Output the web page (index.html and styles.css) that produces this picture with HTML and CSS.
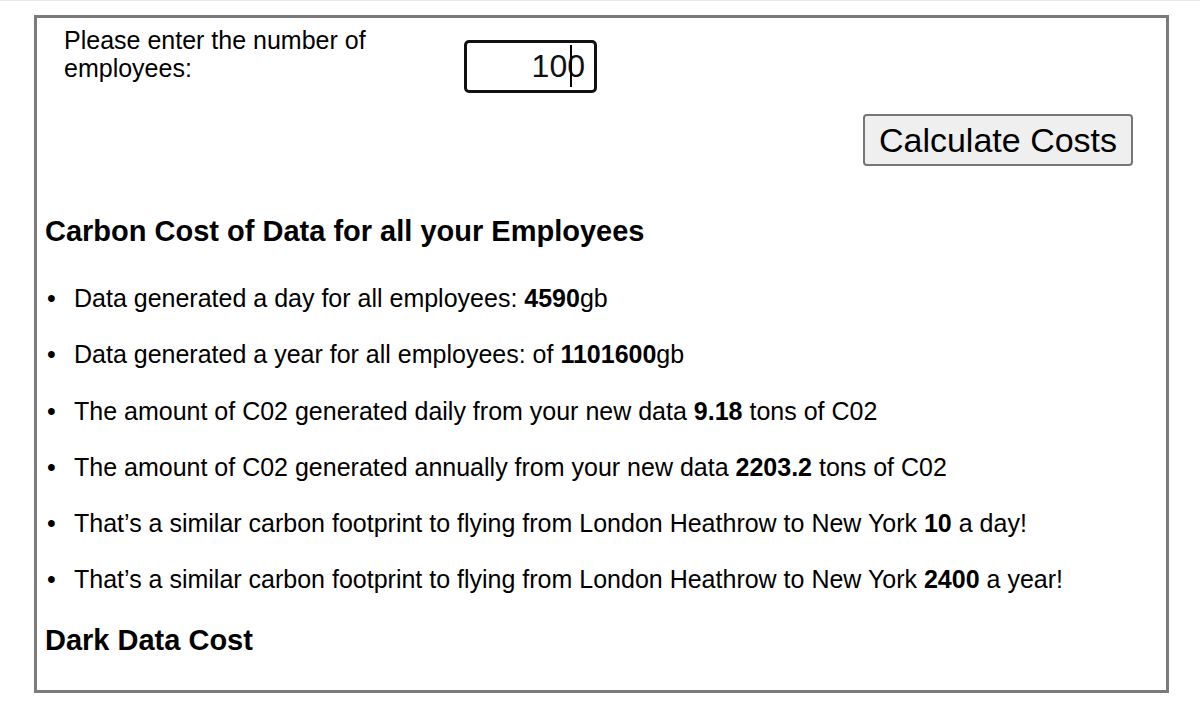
FILE: index.html
```html
<!DOCTYPE html>
<html lang="en">
  <head>
    <meta charset="UTF-8" />
    <meta name="viewport" content="width=device-width, initial-scale=1.0" />
    <title>Carbon Cost Calculator</title>
    <link rel="stylesheet" href="styles.css">
  </head>
  <body>
    <section class="panel">
      <div class="entry">
        <label class="entry-label" for="employees">Please enter the number of employees:</label>
        <div class="entry-field">
          <input id="employees" class="entry-input" type="text" value="100" />
          <span class="caret"></span>
        </div>
      </div>

      <div class="actions">
        <button class="calc-btn" type="button">Calculate Costs</button>
      </div>

      <h3 class="section-title">Carbon Cost of Data for all your Employees</h3>
      <ul class="results">
        <li>Data generated a day for all employees: <b>4590</b>gb</li>
        <li>Data generated a year for all employees: of <b>1101600</b>gb</li>
        <li>The amount of C02 generated daily from your new data <b>9.18</b> tons of C02</li>
        <li>The amount of C02 generated annually from your new data <b>2203.2</b> tons of C02</li>
        <li>That’s a similar carbon footprint to flying from London Heathrow to New York <b>10</b> a day!</li>
        <li>That’s a similar carbon footprint to flying from London Heathrow to New York <b>2400</b> a year!</li>
      </ul>

      <h3 class="section-title dark">Dark Data Cost</h3>
    </section>
  </body>
</html>
```

FILE: styles.css
```css
body {
  margin: 0;
  border-top: 1px solid #e6e6e6;
  background-color: #fff;
  color: #000;
  font-family: "Liberation Sans", Arial, sans-serif;
}

.panel {
  box-sizing: border-box;
  width: 1135px;
  height: 678px;
  margin: 14px 0 0 34px;
  padding: 8px 33px 0 8px;
  border: 3px solid #7b7b7b;
}

/* number of employees row */
.entry {
  display: flex;
  align-items: flex-start;
  padding-left: 19px;
}

.entry-label {
  flex: 0 0 400px;
  font-size: 25px;
  line-height: 28px;
}

.entry-field {
  position: relative;
  margin-top: 14px;
}

.entry-input {
  box-sizing: border-box;
  display: block;
  width: 133px;
  height: 53px;
  padding: 0 9px 0 4px;
  border: 3px solid #111;
  border-radius: 5px;
  font-family: "Liberation Sans", Arial, sans-serif;
  font-size: 32px;
  color: #111;
  text-align: right;
  outline: none;
}

/* text cursor sitting between the digits */
.caret {
  position: absolute;
  left: 106px;
  top: 5px;
  width: 2px;
  height: 42px;
  background: #000;
}

.actions {
  display: flex;
  justify-content: flex-end;
  margin-top: 21px;
}

.calc-btn {
  box-sizing: border-box;
  width: 270px;
  height: 52px;
  padding: 0 13px;
  border: 2px solid #767676;
  border-radius: 4px;
  background-color: #efefef;
  font-family: "Liberation Sans", Arial, sans-serif;
  font-size: 34px;
  color: #000;
}

.section-title {
  margin: 48px 0 0;
  font-size: 29px;
  line-height: 34px;
  font-weight: bold;
}

.section-title.dark {
  margin-top: 30px;
}

.results {
  list-style: none;
  margin: 36px 0 0;
  padding: 0;
  font-size: 25px;
  line-height: 28px;
}

.results li {
  padding-left: 29px;
}

.results li + li {
  margin-top: 28.3px;
}

.results li::before {
  content: "•";
  box-sizing: border-box;
  display: inline-block;
  width: 29px;
  margin-left: -29px;
  padding-left: 2px;
}
```
